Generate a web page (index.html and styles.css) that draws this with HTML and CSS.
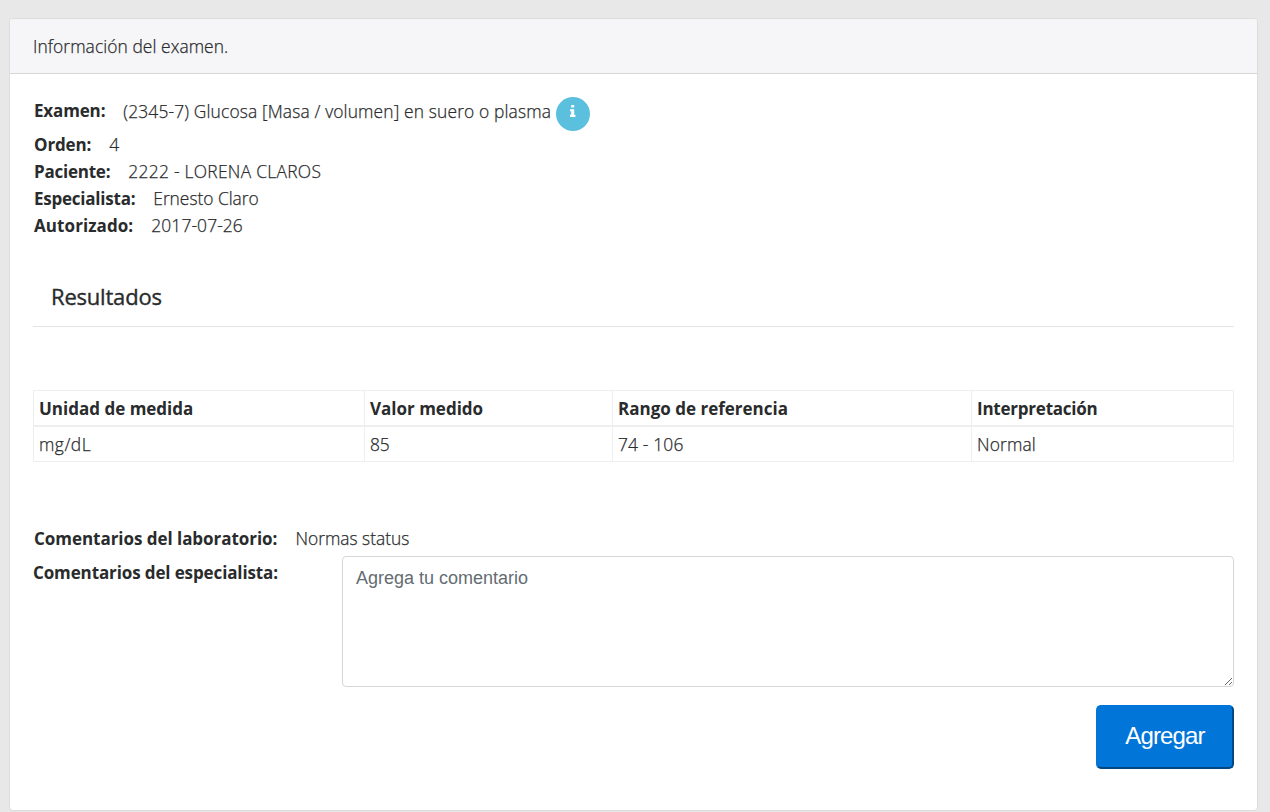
FILE: index.html
```html
<!DOCTYPE html>
<html lang="es">
<head>
<meta charset="utf-8">
<title>Información del examen</title>
<link rel="stylesheet" href="styles.css">
</head>
<body>
<main class="card">
  <header class="card-header"><span class="title">Información del examen.</span></header>
  <div class="card-body">
    <dl class="details">
      <div class="row row-exam"><dt class="w-exam">Examen:</dt><dd class="v-exam">(2345-7) Glucosa [Masa / volumen] en suero o plasma</dd>
        <button class="info" aria-label="Detalles"><svg width="8" height="12" viewBox="0 0 8 12"><path fill="#fff" d="M2.2 0h3v2.6h-3zM1 4.2h4.2v5.6h1.2V12H1V9.8h1.2V6.3H1z"/></svg></button></div>
      <div class="row"><dt class="w-order">Orden:</dt><dd>4</dd></div>
      <div class="row"><dt class="w-patient">Paciente:</dt><dd class="v-patient">2222 - LORENA CLAROS</dd></div>
      <div class="row"><dt class="w-doctor">Especialista:</dt><dd class="v-doctor">Ernesto Claro</dd></div>
      <div class="row"><dt class="w-date">Autorizado:</dt><dd class="v-date">2017-07-26</dd></div>
    </dl>
    <h2 class="section-title">Resultados</h2>
    <table class="results">
      <colgroup><col class="c1"><col class="c2"><col class="c3"><col class="c4"></colgroup>
      <thead><tr><th>Unidad de medida</th><th>Valor medido</th><th>Rango de referencia</th><th class="w-result">Interpretación</th></tr></thead>
      <tbody><tr><td class="v-unit">mg/dL</td><td class="v-number">85</td><td class="v-range">74 - 106</td><td class="v-range">Normal</td></tr></tbody>
    </table>
    <dl class="lab row"><dt class="w-lab">Comentarios del laboratorio:</dt><dd class="v-lab">Normas status</dd></dl>
    <div class="comment">
      <label for="comment">Comentarios del especialista:</label>
      <textarea id="comment" placeholder="Agrega tu comentario"></textarea>
    </div>
    <div class="actions"><button class="submit">Agregar</button></div>
  </div>
</main>
</body>
</html>
```
FILE: styles.css
```css
* { box-sizing: border-box; }
body {
  margin: 0;
  padding: 18px 12px 1px 9px;
  height: 812px;
  overflow: hidden;
  background: #e8e8e8;
  color: #292b2c;
  font: 400 17px/27px "Open Sans", "Noto Sans", sans-serif;
}
.card {
  height: 793px;
  background: #fff;
  border: 1px solid #dcdcdd;
  border-radius: 4px;
  overflow: hidden;
}
.card-header {
  height: 55px;
  padding: 14px 23px;
  background: #f6f6f9;
  border-bottom: 1px solid #d6d7d9;
  font-size: 17.4px;
  font-weight: 300;
  letter-spacing: .07px;
  -webkit-text-stroke: .25px #292b2c;
}
.card-body { padding: 23px; }
dl, dd, dt { margin: 0; }
.details { margin-left: 1px; }
.row { display: flex; gap: 18px; height: 27px; white-space: nowrap; }
.row-exam { height: 34px; }
.row dt, th, label { font-weight: 700; }
.row dd, td {
  font-size: 17.4px;
  font-weight: 300;
  -webkit-text-stroke: .25px #292b2c;
}
.row-exam dd { padding-top: 1px; }

/* Tracking of the individual labels and values */
.w-exam, .w-order { letter-spacing: -.15px; }
.w-patient, .w-doctor { letter-spacing: -.23px; }
.w-date { letter-spacing: .08px; }
.w-lab { letter-spacing: -.04px; }
.w-result { letter-spacing: -.23px; }
.v-exam { letter-spacing: .14px; }
.v-patient { letter-spacing: .28px; }
.v-doctor { letter-spacing: -.03px; }
.v-date { letter-spacing: .1px; }
.v-number { letter-spacing: -.3px; }
.v-unit { letter-spacing: .5px; }
.v-range { letter-spacing: .15px; }

.info {
  width: 34px;
  height: 34px;
  margin-left: -13px;
  padding: 0 0 7px;
  border: 0;
  border-radius: 50%;
  background: #5bc0de;
  display: flex;
  align-items: center;
  justify-content: center;
}
.section-title {
  margin: 42px 0 0;
  padding: 0 18px;
  height: 46px;
  border-bottom: 1px solid #e5e5e5;
  font-size: 22px;
  font-weight: 500;
  line-height: 30px;
  letter-spacing: -.2px;
  -webkit-text-stroke: .35px #292b2c;
}
.results {
  width: 1201px;
  margin-top: 63px;
  border-collapse: collapse;
  table-layout: fixed;
}
.c1 { width: 331px; }
.c2 { width: 248px; }
.c3 { width: 359px; }
.c4 { width: 262px; }
th, td {
  height: 35px;
  padding: 1px 5px 0;
  border: 1px solid #eceeef;
  text-align: left;
}
td { height: 36px; }
th { border-bottom-width: 2px; }
.lab { margin: 63px 0 4px 1px; }
.comment { display: flex; justify-content: space-between; height: 131px; }
.comment label { padding-top: 3px; white-space: nowrap; letter-spacing: -.12px; }
textarea {
  width: 892px;
  height: 131px;
  padding: 9px 13px;
  border: 1px solid #d5d6d7;
  border-radius: 4px;
  font: 18px/25px "Liberation Sans", Arial, sans-serif;
  resize: both;
}
textarea::placeholder { color: #636c72; opacity: 1; }
.actions { display: flex; justify-content: flex-end; margin-top: 18px; }
.submit {
  width: 138px;
  height: 64px;
  padding: 0 0 2px;
  border: 2px outset #0275d8;
  border-radius: 5px;
  background: #0275d8;
  color: #fff;
  font: 24px/36px "Liberation Sans", Arial, sans-serif;
  letter-spacing: -.85px;
}
```
